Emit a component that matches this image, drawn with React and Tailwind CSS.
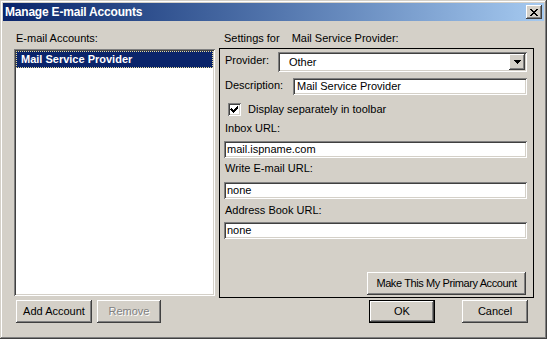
const raised =
  "shadow-[inset_-1px_-1px_#404040,inset_1px_1px_#ffffff,inset_-2px_-2px_#808080,inset_2px_2px_#d4d0c8]";
const sunken =
  "shadow-[inset_1px_1px_#808080,inset_-1px_-1px_#ffffff,inset_2px_2px_#404040,inset_-2px_-2px_#d4d0c8]";

const Button = ({ children, className = "", disabled }) => (
  <div
    className={`flex items-center justify-center bg-[#d4d0c8] ${raised} ${className}`}
  >
    {disabled ? (
      <span className="text-[#808080] [text-shadow:1px_1px_0_#ffffff]">
        {children}
      </span>
    ) : (
      children
    )}
  </div>
);

const TextField = ({ value, className = "", pad = "pl-[4px]" }) => (
  <div
    className={`flex items-center h-[17px] bg-white ${sunken} ${pad} ${className}`}
  >
    {value}
  </div>
);

const Label = ({ children, className = "" }) => (
  <div className={`h-[13px] leading-[13px] ${className}`}>{children}</div>
);

export default function App() {
  return (
    <div
      className={`w-[547px] h-[339px] p-[3px] bg-[#d4d0c8] text-[11px] leading-[13px] text-black ${"shadow-[inset_-1px_-1px_#404040,inset_1px_1px_#d4d0c8,inset_-2px_-2px_#808080,inset_2px_2px_#ffffff]"}`}
      style={{ fontFamily: '"Liberation Sans", Arial, sans-serif' }}
    >
      {/* title bar */}
      <div className="flex items-center h-[18px] bg-gradient-to-r from-[#0a246a] to-[#a6caf0]">
        <span className="pl-[2px] text-[12px] font-bold text-white tracking-[-0.2px]">
          Manage E-mail Accounts
        </span>
        <div
          className={`ml-auto mr-[2px] w-[16px] h-[14px] flex items-center justify-center bg-[#d4d0c8] ${raised}`}
        >
          <svg width="8" height="7" viewBox="0 0 8 7" shapeRendering="crispEdges">
            <path
              d="M0 0h2v1h1v1h2v-1h1v-1h2v1h-1v1h-1v1h-1v1h1v1h1v1h1v1h-2v-1h-1v-1h-2v1h-1v1h-2v-1h1v-1h1v-1h1v-1h-1v-1h-1v-1h-1z"
              fill="#000"
            />
          </svg>
        </div>
      </div>

      {/* body */}
      <div className="flex pl-[11px] pt-[11px]">
        {/* accounts column */}
        <div className="flex flex-col w-[201px]">
          <Label className="pl-[2px]">E-mail Accounts:</Label>
          <div className={`mt-[4px] h-[247px] bg-white p-[2px] ${sunken}`}>
            <div className="h-[17px] flex items-center pl-[4px] bg-[#0a246a] border border-dotted border-[#e8dc98] font-bold text-white">
              Mail Service Provider
            </div>
          </div>
          <div className="mt-[4px] flex gap-[5px] pl-[2px]">
            <Button className="w-[76px] h-[23px]">Add Account</Button>
            <Button className="w-[64px] h-[23px]" disabled>
              Remove
            </Button>
          </div>
        </div>

        {/* settings column */}
        <div className="ml-[4px] w-[315px] flex flex-col">
          <Label className="pl-[5px]">
            Settings for<span className="ml-[12px]">Mail Service Provider:</span>
          </Label>
          <div className="mt-[3px] h-[250px] border border-black flex flex-col pl-[4px] pr-[6px] pt-[3px] pb-[2px]">
            <div className="flex">
              <Label className="w-[54px] pl-[1px] pt-[2px]">Provider:</Label>
              <div className={`flex-1 h-[20px] flex items-center bg-white pl-[11px] ${sunken}`}>
                Other
                <div
                  className={`ml-auto mr-[2px] w-[16px] h-[16px] flex items-center justify-center bg-[#d4d0c8] ${raised}`}
                >
                  <svg width="7" height="4" viewBox="0 0 7 4" shapeRendering="crispEdges">
                    <path d="M0 0h7v1h-1v1h-1v1h-1v1h-1v-1h-1v-1h-1v-1h-1z" fill="#000" />
                  </svg>
                </div>
              </div>
            </div>

            <div className="flex mt-[6px]">
              <Label className="w-[69px] pl-[1px] pt-[1px]">Description:</Label>
              <TextField value="Mail Service Provider" className="flex-1" />
            </div>

            <div className="flex items-center mt-[8px] pl-[4px]">
              <div className={`w-[13px] h-[13px] bg-white ${sunken}`}>
                <svg width="13" height="13" viewBox="0 0 13 13" shapeRendering="crispEdges">
                  <path d="M3 5h1v1h1v1h1v-1h1v-1h1v-1h1v-1h1v3h-1v1h-1v1h-1v1h-1v1h-1v-1h-1v-1h-1v-1h-1z" fill="#000" />
                </svg>
              </div>
              <span className="ml-[7px]">Display separately in toolbar</span>
            </div>

            <Label className="mt-[6px] pl-[1px]">Inbox URL:</Label>
            <TextField value="mail.ispname.com" className="mt-[6px]" pad="pl-[3px]" />

            <Label className="mt-[4px] pl-[1px]">Write E-mail URL:</Label>
            <TextField value="none" className="mt-[7px]" pad="pl-[3px]" />

            <Label className="mt-[5px] pl-[1px]">Address Book URL:</Label>
            <TextField value="none" className="mt-[5px]" pad="pl-[3px]" />

            <div className="mt-auto flex justify-end pr-[1px]">
              <Button className="w-[159px] h-[23px] tracking-[-0.4px]">
                Make This My Primary Account
              </Button>
            </div>
          </div>

          <div className="mt-[2px] flex justify-end gap-[27px] pr-[6px]">
            <div className="border border-black">
              <Button className="w-[64px] h-[21px]">OK</Button>
            </div>
            <Button className="w-[66px] h-[23px]">Cancel</Button>
          </div>
        </div>
      </div>
    </div>
  );
}
